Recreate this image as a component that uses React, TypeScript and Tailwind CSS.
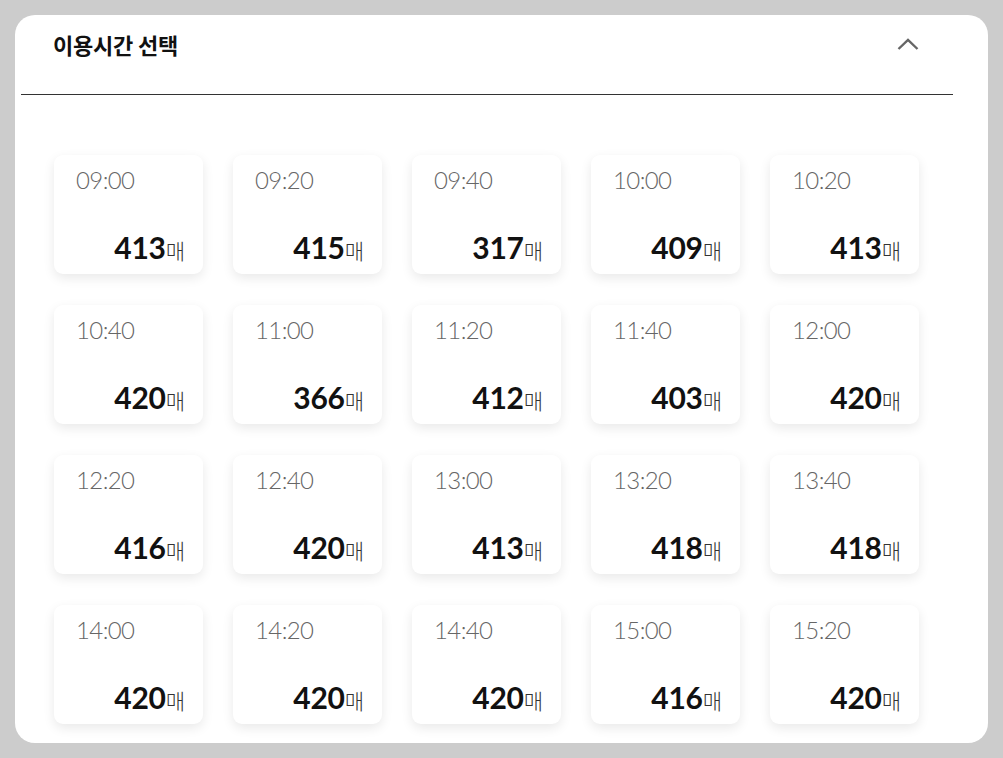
import React from "react"

const slots = [
  { time: "09:00", count: 413 },
  { time: "09:20", count: 415 },
  { time: "09:40", count: 317 },
  { time: "10:00", count: 409 },
  { time: "10:20", count: 413 },
  { time: "10:40", count: 420 },
  { time: "11:00", count: 366 },
  { time: "11:20", count: 412 },
  { time: "11:40", count: 403 },
  { time: "12:00", count: 420 },
  { time: "12:20", count: 416 },
  { time: "12:40", count: 420 },
  { time: "13:00", count: 413 },
  { time: "13:20", count: 418 },
  { time: "13:40", count: 418 },
  { time: "14:00", count: 420 },
  { time: "14:20", count: 420 },
  { time: "14:40", count: 420 },
  { time: "15:00", count: 416 },
  { time: "15:20", count: 420 },
]

export default function App() {
  return (
    <div className="w-[1003px] h-[758px] bg-[#cccccc] p-[15px] overflow-hidden">
      <div className="w-[973px] h-[728px] bg-white rounded-[20px] overflow-hidden">
        {/* header */}
        <div className="flex items-center justify-between h-[58px] pl-[38px] pr-[69px]">
          <h2 className="text-[22px] font-bold text-[#111] font-['Noto_Sans_CJK_KR',sans-serif] tracking-[-0.2px]">
            이용시간 선택
          </h2>
          <svg width="22" height="14" viewBox="0 0 22 14" fill="none">
            <path d="M1.5 12 L11 3 L20.5 12" stroke="#666" strokeWidth="2.4" />
          </svg>
        </div>
        <div className="ml-[6px] mr-[35px] mt-[21px] border-t border-[#333]"></div>

        <div className="grid grid-cols-[repeat(5,149px)] gap-x-[30px] gap-y-[31px] pl-[39px] pt-[60px]">
          {slots.map((s, i) => (
            <button
              key={i}
              className="h-[119px] bg-white rounded-[9px] shadow-[0_4px_12px_rgba(0,0,0,0.09)] flex flex-col justify-between pl-[22px] pr-[18px] pt-[7px] pb-[4px] text-left"
            >
              <span className="text-[24px] font-light text-[#666] font-['Lato',sans-serif] tracking-[-0.6px]">
                {s.time}
              </span>
              <span className="self-end flex items-baseline">
                <span className="text-[30px] font-bold text-[#111] font-['Lato',sans-serif] tracking-[-0.3px]">
                  {s.count}
                </span>
                <span className="text-[21px] font-light text-[#333] font-['Noto_Sans_CJK_KR',sans-serif]">
                  매
                </span>
              </span>
            </button>
          ))}
        </div>
      </div>
    </div>
  )
}
